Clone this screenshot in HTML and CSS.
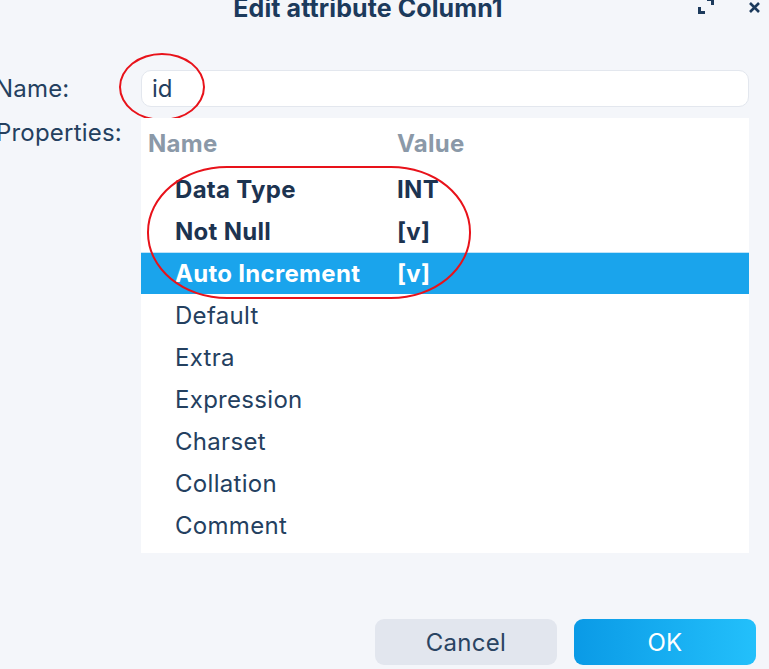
FILE: index.html
```html
<!DOCTYPE html>
<html>
<head>
<meta charset="utf-8">
<link rel="stylesheet" href="styles.css">
</head>
<body>
<div class="dialog">
  <header class="titlebar">
    <div class="title">Edit attribute Column1</div>
    <div class="actions">
      <svg class="icon-expand" width="16" height="16" viewBox="0 0 16 16"><path d="M9 1.5h5.5V7M1.5 9v5.5H7" fill="none" stroke="#1c3a5c" stroke-width="3"/></svg>
      <svg class="icon-close" width="13" height="13" viewBox="0 0 13 13"><path d="M2 2l9 9M11 2l-9 9" fill="none" stroke="#1c3a5c" stroke-width="2.6"/></svg>
    </div>
  </header>
  <div class="form">
    <label class="label label-name">Name:</label>
    <div class="input-wrap">
      <div class="input">id</div>
      <div class="mark mark-id"></div>
    </div>
    <label class="label label-props">Properties:</label>
    <div class="table">
      <div class="row head"><span class="c1">Name</span><span class="c2">Value</span></div>
      <div class="row bold"><span class="c1 in">Data Type</span><span class="c2">INT</span></div>
      <div class="row bold"><span class="c1 in">Not Null</span><span class="c2">[v]</span></div>
      <div class="row bold selected"><span class="c1 in">Auto Increment</span><span class="c2">[v]</span></div>
      <div class="row"><span class="c1 in">Default</span></div>
      <div class="row"><span class="c1 in">Extra</span></div>
      <div class="row"><span class="c1 in">Expression</span></div>
      <div class="row"><span class="c1 in">Charset</span></div>
      <div class="row"><span class="c1 in">Collation</span></div>
      <div class="row"><span class="c1 in">Comment</span></div>
      <div class="mark mark-rows"></div>
    </div>
  </div>
  <div class="buttons">
    <button class="btn cancel">Cancel</button>
    <button class="btn ok">OK</button>
  </div>
</div>
</body>
</html>
```
FILE: styles.css
```css
html, body {
  margin: 0;
  padding: 0;
  background: #f4f6fa;
  width: 769px;
  height: 669px;
  overflow: hidden;
}
body {
  font-family: Inter, "Noto Sans", sans-serif;
  color: #1f3b5a;
}
.dialog {
  display: flex;
  flex-direction: column;
  height: 669px;
}
.titlebar {
  position: relative;
  height: 40px;
  margin-top: -12px;
  display: flex;
  align-items: center;
  justify-content: center;
  padding-right: 33px;
}
.title {
  font-weight: 700;
  font-size: 25px;
  color: #1c3a5c;
  letter-spacing: 0.1px;
}
.actions {
  position: absolute;
  right: 8px;
  top: 12px;
  display: flex;
  align-items: center;
  gap: 34px;
}
.icon-expand { margin-top: -2px; }
.form {
  display: grid;
  grid-template-columns: 144px 608px;
  grid-template-rows: 37px 435px;
  row-gap: 11px;
  margin-left: -3px;
  margin-top: 42px;
}
.label {
  font-size: 24px;
  color: #24405f;
  letter-spacing: 0.2px;
}
.label-name { align-self: center; margin-left: -2px; }
.label-props { margin-left: -1px; }
.input-wrap { position: relative; }
.input {
  box-sizing: border-box;
  height: 37px;
  background: #fff;
  border: 1px solid #e3e7ee;
  border-radius: 10px;
  font-size: 24px;
  padding-left: 10px;
  display: flex;
  align-items: center;
  color: #24405f;
}
.table {
  position: relative;
  background: #fff;
}
.row {
  height: 42px;
  display: flex;
  align-items: center;
  font-size: 24px;
  color: #24405f;
  letter-spacing: 0.3px;
}
.row .c1 { width: 256px; padding-left: 7px; box-sizing: border-box; }
.row .c1.in { padding-left: 34px; }
.row.head { height: 50px; font-weight: 700; color: #8b99a8; }
.row.bold { font-weight: 700; color: #1c3350; }
.row.selected { background: #1aa4ec; color: #fff; border-top: 1px solid #bfe3f8; height: 41px; }
.mark {
  position: absolute;
  border: 2px solid #e8121a;
  pointer-events: none;
}
.mark-id {
  left: -22px;
  top: -17px;
  width: 82px;
  height: 64px;
  border-radius: 50%;
}
.mark-rows {
  left: 6px;
  top: 48px;
  width: 320px;
  height: 129px;
  border-radius: 80px / 66px;
}
.buttons {
  display: flex;
  justify-content: flex-end;
  gap: 17px;
  margin-top: auto;
  margin-bottom: 4px;
  padding-right: 13px;
}
.btn {
  width: 182px;
  height: 46px;
  border: none;
  border-radius: 9px;
  font-family: Inter, "Noto Sans", sans-serif;
  font-size: 24px;
  letter-spacing: 0.3px;
}
.cancel { background: #e2e6ee; color: #2a4462; }
.ok { background: linear-gradient(90deg, #0a9ae6, #23c0fb); color: #fff; }
```
